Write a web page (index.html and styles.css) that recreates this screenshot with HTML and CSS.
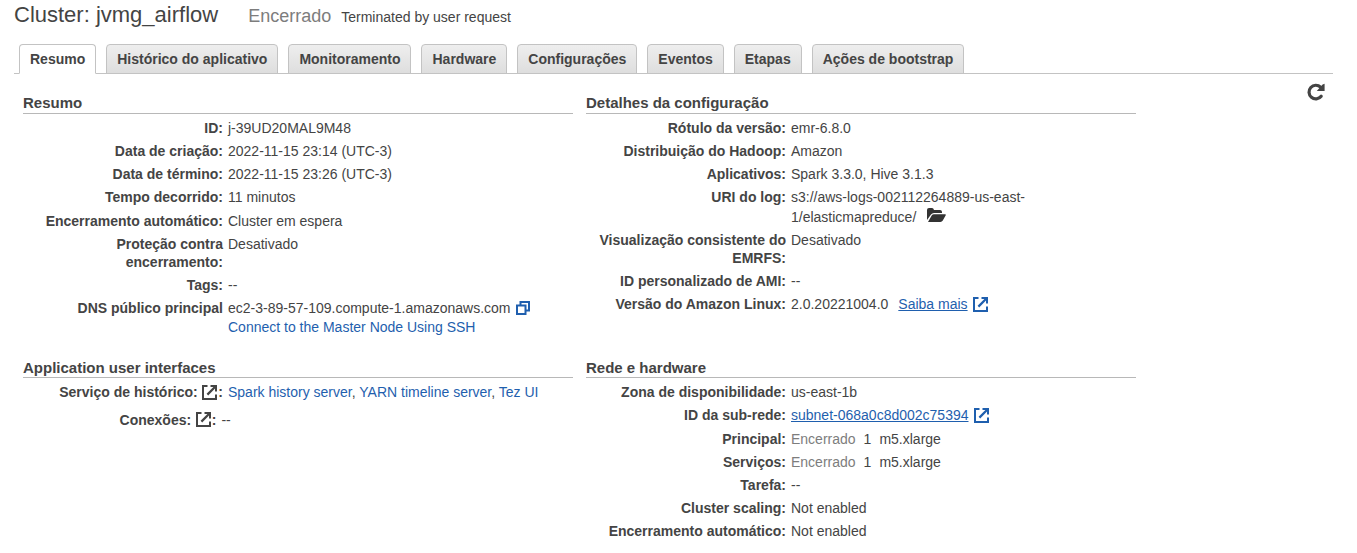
FILE: index.html
```
<!DOCTYPE html>
<html lang="pt-BR">
<head>
<meta charset="utf-8">
<title>Cluster: jvmg_airflow</title>
<link rel="stylesheet" href="styles.css">
</head>
<body>
<svg class="defs" width="0" height="0">
  <symbol id="external" viewBox="0 0 15 15">
    <path d="M5.5 1H1V14H14V9.5" fill="none" stroke="currentColor" stroke-width="2"/>
    <path d="M8.5 0H15V6.5H13V3.6L6.2 10.4L4.6 8.8L11.4 2H8.5Z" fill="currentColor"/>
  </symbol>
</svg>
<header class="title-bar">
  <h1 class="title">Cluster: jvmg_airflow</h1>
  <span class="state">Encerrado</span>
  <span class="reason">Terminated by user request</span>
</header>
<nav class="tabs">
  <a class="tab active">Resumo</a>
  <a class="tab">Histórico do aplicativo</a>
  <a class="tab">Monitoramento</a>
  <a class="tab">Hardware</a>
  <a class="tab">Configurações</a>
  <a class="tab">Eventos</a>
  <a class="tab">Etapas</a>
  <a class="tab">Ações de bootstrap</a>
</nav>
<main class="content">
  <div class="panels">
    <section class="panel upper">
      <h2 class="heading">Resumo</h2>
      <dl class="rows">
        <div class="row"><dt>ID:</dt><dd>j-39UD20MAL9M48</dd></div>
        <div class="row"><dt>Data de criação:</dt><dd>2022-11-15 23:14 (UTC-3)</dd></div>
        <div class="row"><dt>Data de término:</dt><dd>2022-11-15 23:26 (UTC-3)</dd></div>
        <div class="row"><dt>Tempo decorrido:</dt><dd>11 minutos</dd></div>
        <div class="row"><dt>Encerramento automático:</dt><dd>Cluster em espera</dd></div>
        <div class="row"><dt>Proteção contra<br>encerramento:</dt><dd>Desativado</dd></div>
        <div class="row"><dt>Tags:</dt><dd>--</dd></div>
        <div class="row"><dt>DNS público principal</dt><dd class="stacked tight"><span class="line">ec2-3-89-57-109.compute-1.amazonaws.com<svg class="copy" viewBox="0 0 14 14"><path d="M4.5 4V1H13V9.5H10M1 4.5H9.5V13H1Z" fill="none" stroke="currentColor" stroke-width="2"/></svg></span><a class="link">Connect to the Master Node Using SSH</a></dd></div>
      </dl>
    </section>
    <section class="panel upper">
      <h2 class="heading">Detalhes da configuração</h2>
      <dl class="rows">
        <div class="row"><dt>Rótulo da versão:</dt><dd>emr-6.8.0</dd></div>
        <div class="row"><dt>Distribuição do Hadoop:</dt><dd>Amazon</dd></div>
        <div class="row"><dt>Aplicativos:</dt><dd>Spark 3.3.0, Hive 3.1.3</dd></div>
        <div class="row"><dt>URI do log:</dt><dd class="stacked"><span class="line">s3://aws-logs-002112264889-us-east-</span><span class="line">1/elasticmapreduce/<svg class="folder" viewBox="0 0 19 15"><path d="M0 12V2Q0 0 2 0H5Q6.5 0 7 2H13Q15 2 15 4V5H7Q5 5 4 6.5Z" fill="currentColor"/><path d="M1 14L4.7 7.5Q5.5 6.2 7 6.2H18Q19.4 6.2 18.6 7.6L15.8 12.6Q15 14 13.4 14Z" fill="currentColor"/></svg></span></dd></div>
        <div class="row"><dt>Visualização consistente do<br>EMRFS:</dt><dd>Desativado</dd></div>
        <div class="row"><dt>ID personalizado de AMI:</dt><dd>--</dd></div>
        <div class="row"><dt>Versão do Amazon Linux:</dt><dd><span class="line">2.0.20221004.0<a class="link underlined more">Saiba mais</a><svg class="external link"><use href="#external"/></svg></span></dd></div>
      </dl>
    </section>
    <section class="panel">
      <h2 class="heading">Application user interfaces</h2>
      <dl class="rows loose">
        <div class="row"><dt class="with-icon">Serviço de histórico:<svg class="external"><use href="#external"/></svg>:</dt><dd><a class="link">Spark history server</a>, <a class="link">YARN timeline server</a>, <a class="link">Tez UI</a></dd></div>
        <div class="row narrow"><dt class="with-icon">Conexões:<svg class="external"><use href="#external"/></svg>:</dt><dd>--</dd></div>
      </dl>
    </section>
    <section class="panel">
      <h2 class="heading">Rede e hardware</h2>
      <dl class="rows">
        <div class="row"><dt>Zona de disponibilidade:</dt><dd>us-east-1b</dd></div>
        <div class="row"><dt>ID da sub-rede:</dt><dd><span class="line"><a class="link underlined">subnet-068a0c8d002c75394</a><svg class="external link"><use href="#external"/></svg></span></dd></div>
        <div class="row"><dt>Principal:</dt><dd class="nodes"><span class="muted">Encerrado</span><span>1</span><span>m5.xlarge</span></dd></div>
        <div class="row"><dt>Serviços:</dt><dd class="nodes"><span class="muted">Encerrado</span><span>1</span><span>m5.xlarge</span></dd></div>
        <div class="row"><dt>Tarefa:</dt><dd>--</dd></div>
        <div class="row"><dt>Cluster scaling:</dt><dd>Not enabled</dd></div>
        <div class="row"><dt>Encerramento automático:</dt><dd>Not enabled</dd></div>
      </dl>
    </section>
  </div>
  <svg class="refresh" viewBox="0 0 18 18"><path d="M14.2 13.2A6.8 6.8 0 1 1 13.6 4.2" fill="none" stroke="currentColor" stroke-width="3.2" stroke-linecap="round"/><path d="M17.6 .8V8H9.8L12 5.6L15.6 1.6Z" fill="currentColor"/></svg>
</main>
</body>
</html>
```
FILE: styles.css
```
* { box-sizing: border-box; }
body {
  margin: 0;
  height: 553px;
  overflow: hidden;
  background: #fff;
  color: #444;
  font: 14px/18.2px "Liberation Sans", Arial, sans-serif;
}
.defs { display: block; }
.title-bar {
  display: flex;
  align-items: baseline;
  height: 44px;
  padding: 2px 0 0 14px;
  white-space: nowrap;
}
.title { margin: 0 30px 0 0; font-size: 22px; line-height: 26px; font-weight: 400; }
.state { margin-right: 10px; font-size: 18px; color: #7d7d7d; }
.tabs {
  display: flex;
  gap: 10px;
  width: 1319px;
  height: 30px;
  margin-left: 14px;
  padding-left: 5px;
  border-bottom: 1px solid #c3c3c3;
}
.tab {
  height: 30px;
  padding: 0 10px;
  border: 1px solid #c3c3c3;
  border-radius: 4px 4px 0 0;
  background: linear-gradient(#eee, #dedede);
  font-weight: 700;
  line-height: 28px;
  white-space: nowrap;
}
.tab.active { background: #fff; border-bottom-color: #fff; }
.content { display: flex; justify-content: space-between; padding: 0 32.5px 0 23px; }
.panels {
  display: grid;
  grid-template-columns: 550px 550px;
  grid-template-rows: 264px auto;
  column-gap: 13px;
  padding-top: 20px;
}
.heading {
  height: 20px;
  margin: 0;
  border-bottom: 1px solid #b8b8b8;
  font-size: 15px;
  line-height: 19px;
}
.upper .heading { line-height: 17px; }
.rows { display: flex; flex-direction: column; gap: 5px; margin: 0; padding-top: 5.1px; }
.upper .rows { padding-top: 4.7px; }
.rows.loose { gap: 9.6px; }
.row { display: grid; grid-template-columns: 200px 1fr; column-gap: 5px; }
.row.narrow { grid-template-columns: 193.4px 1fr; }
dt { font-weight: 700; text-align: right; white-space: nowrap; }
dd { margin: 0; white-space: nowrap; }
.stacked { display: flex; flex-direction: column; gap: 1.2px; }
.stacked.tight { gap: 0.4px; }
.line { display: flex; align-items: center; height: 18.2px; }
.link { color: #1f5fae; }
.underlined { text-decoration: underline; }
.more { margin-left: 10px; }
.external { width: 15px; height: 15px; }
.line .external { margin-left: 5.6px; }
.with-icon { display: flex; justify-content: flex-end; align-items: center; height: 18.2px; }
.with-icon .external { margin: 0 1px 0 4.6px; }
.copy { width: 14px; height: 14px; margin-left: 6px; color: #1f5fae; }
.folder { width: 19px; height: 15px; margin: -2px 0 0 11px; color: #333; }
.nodes { display: flex; gap: 8px; }
.muted { color: #7d7d7d; }
.refresh { width: 18px; height: 18px; margin-top: 9px; }
```
